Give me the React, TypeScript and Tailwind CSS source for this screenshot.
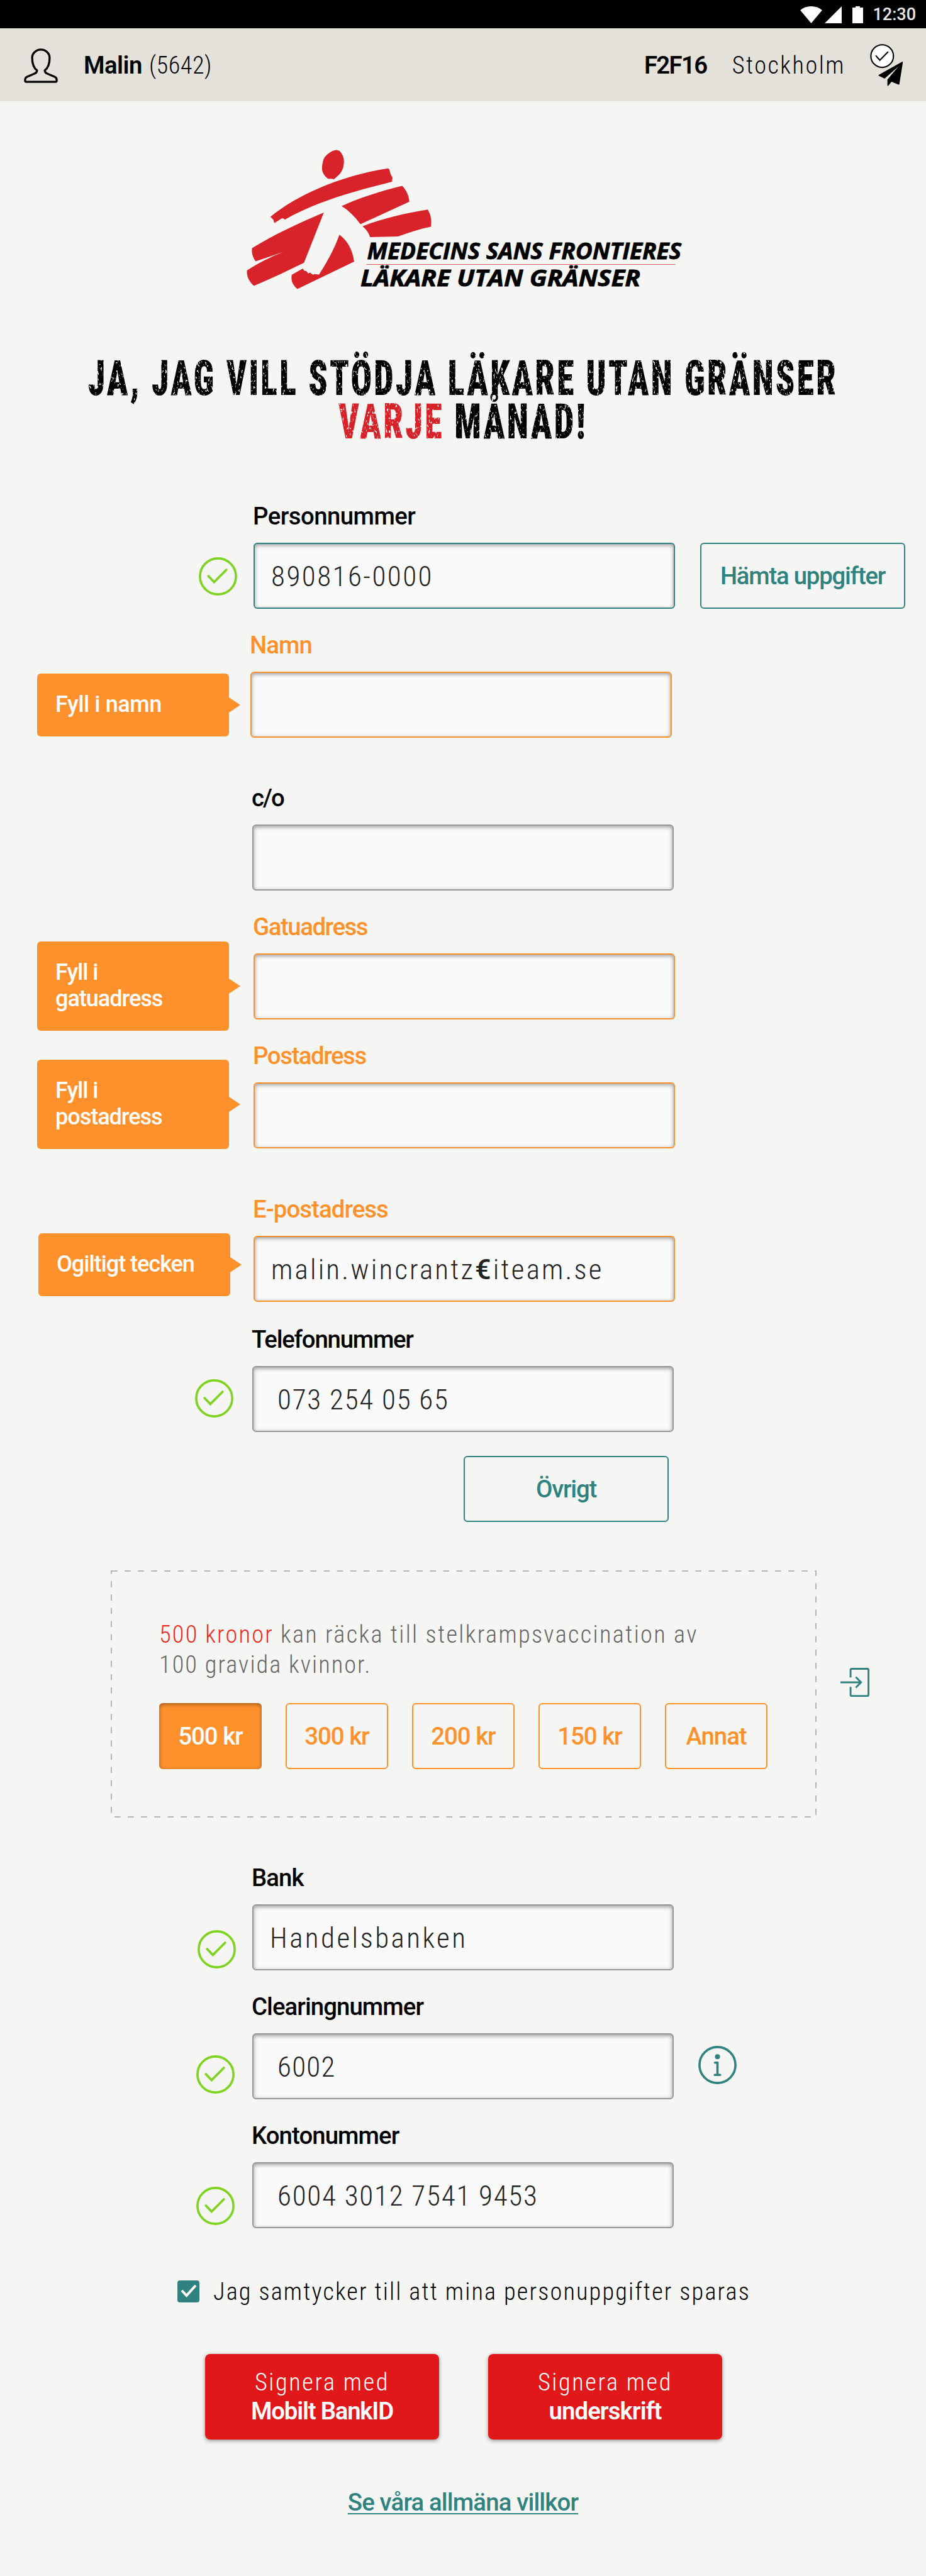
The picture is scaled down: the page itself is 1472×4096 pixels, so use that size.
import type { ReactNode } from "react";

const WifiIcon = () => (
  <svg className="h-[27px] w-[35px]" viewBox="0 0 36 28" fill="#fff">
    <path d="M18 28 0 6.5C5 2.2 11 0 18 0s13 2.2 18 6.5Z" />
  </svg>
);

const UserIcon = () => (
  <svg className="h-[55px] w-[54px]" viewBox="0 0 56 57" fill="none" stroke="#000" strokeWidth="3.4" strokeLinejoin="round">
    <path d="M28 2C20 2 13.6 8 13.6 15.5c0 10 2.400 16.500 8 20.700 0 3-1 4-4 5.300L5 46.800c-2 .9-3 2.300-3 4.700v2c0 1 .5 1.500 1.500 1.500h49c1 0 1.500-.5 1.500-1.500v-2c0-2.400-1-3.800-3-4.700l-12.600-5.300c-3-1.300-4-2.300-4-5.300 5.600-4.200 8-10.700 8-20.700C42.400 8 36 2 28 2Z" />
  </svg>
);

const SentIcon = () => (
  <svg className="h-[69px] w-[54px]" viewBox="0 0 56 72">
    <circle cx="20" cy="20" r="18.700" fill="#fff" stroke="#000" strokeWidth="2.200" />
    <path d="m9.800 19.700 6.400 7.200L29.400 13.300" fill="none" stroke="#000" strokeWidth="2.200" strokeLinecap="round" />
    <path d="M53 29.400 14.400 51c-.6.500-.6 1.200 0 1.600l9.600 4.700L47.200 37 28.700 59v9.800c.3.900 1 .9 1.500.2l5.300-6.300 11.500 4.500c.8.300 1.300 0 1.500-.8L54.300 30.200c0-.8-.6-1.200-1.300-.8Z" />
  </svg>
);

const CheckIcon = () => (
  <svg className="h-[61px] w-[61px]" viewBox="0 0 64 64" fill="none" stroke="#7ed321" strokeWidth="3.800" strokeLinecap="round">
    <circle cx="32" cy="32" r="30" />
    <path d="m16 31.500 9.500 10L46 21" />
  </svg>
);

const InfoIcon = () => (
  <svg className="h-[61px] w-[61px]" viewBox="0 0 64 64" fill="none" stroke="#30827f" strokeWidth="3.800" strokeLinecap="round">
    <circle cx="32" cy="32" r="30" />
    <circle cx="32" cy="18" r="4.200" fill="#30827f" stroke="none" />
    <path d="M28 28h4v20.500m-4.500 0h9" />
  </svg>
);

const ExitIcon = () => (
  <svg className="h-[46px] w-[46px]" viewBox="0 0 48 48" fill="none" stroke="#30827f" strokeWidth="3">
    <path d="M16.800 16V3.500q0-2 2-2h25.700q2 0 2 2v41q0 2-2 2H18.800q-2 0-2-2V31.500" />
    <path d="M0 24h34M25.400 15.200 34.200 24l-8.800 8.800" />
  </svg>
);

const Logo = () => (
  <svg className="h-[268px] w-[748px]" viewBox="0 0 1568 840" preserveAspectRatio="none">
    <g fill="#d8232a">
      <path d="M358 58 368 62C379 80 384 98 383 120 382 150 375 172 361 189L350 204 343 201 330 201C318 188 310 170 310 150 310 125 315 100 320 92 332 72 345 60 358 58Z" />
      <path d="M138 391C220 290 360 190 530 150L534 154 539 180 545 196 543 216C420 262 290 315 186 405L181 399 176 399 151 422 148 406Z" />
      <path d="M375 338C430 300 500 265 577 237 592 260 599 285 601 316L438 428C420 392 400 360 375 338Z" />
      <path d="M445 438C510 400 590 372 662 355 672 378 676 405 673 440 635 452 600 468 563 489L470 492C465 470 458 455 445 438Z" />
      <path d="M316 370C235 420 150 480 77 547 74 570 80 595 89 613L182 566C140 590 100 620 60 658 58 690 68 715 83 735 140 700 195 660 250 620Z" />
      <path d="M368 480C395 510 412 555 417 614L228 751C212 730 206 710 209 680L246 649 250 659 258 662 264 673 270 669 280 680 285 676 300 679C325 620 350 555 368 480Z" />
    </g>
    <path d="M458 628H1487" stroke="#d8232a" strokeWidth="3" />
    <g transform="scale(2.010 3)" fontFamily="Open Sans" fontWeight="700" fontStyle="italic" fontSize="37.500" stroke="#000" strokeWidth="0.800">
      <text x="229" y="200.500" textLength="521" lengthAdjust="spacingAndGlyphs">MEDECINS SANS FRONTIERES</text>
      <text x="218" y="245.500" textLength="464" lengthAdjust="spacingAndGlyphs">LÄKARE UTAN GRÄNSER</text>
    </g>
  </svg>
);

const tones = {
  teal: { label: "text-black", box: "border-[#30827f]" },
  gray: { label: "text-black", box: "border-[#979797]" },
  orange: { label: "text-[#ff912c]", box: "border-[#ff912c]" },
};

function Field({ label, tone, left, leftWidth, value, right, className = "" }: {
  label: ReactNode;
  tone: keyof typeof tones;
  left?: ReactNode;
  leftWidth: string;
  value?: ReactNode;
  right?: ReactNode;
  className?: string;
}) {
  return (
    <div className={`flex h-[170px] items-start ${className}`}>
      <div className={`shrink-0 ${leftWidth}`}>{left}</div>
      <div className="w-[670px] shrink-0">
        <div className={`h-[46px] text-[38.300px] leading-[46px] font-medium tracking-[-0.900px] ${tones[tone].label}`}>
          <span className="-ml-[1px]">{label}</span>
        </div>
        <div className={`mt-[19px] flex h-[105px] items-center rounded-[6px] border-2 bg-[#fafafa] pt-[3px] text-[45px] font-light tracking-[1.800px] whitespace-nowrap text-[#222] [font-stretch:75%] shadow-[inset_0_2px_6px_rgba(0,0,0,0.4)] ${tones[tone].box}`}>
          {value}
        </div>
      </div>
      {right}
    </div>
  );
}

function Tag({ children, className }: { children: ReactNode; className: string }) {
  return (
    <div className={`flex w-[323px] items-center ${className}`}>
      <div className="h-full w-[305px] rounded-[6px] bg-[#ff912c] pt-[28px] pl-[29px] text-[36px] leading-[42px] font-medium tracking-[-1px] whitespace-nowrap text-white">{children}</div>
      <svg className="h-[24px] w-[18px]" viewBox="0 0 18 24" fill="#ff912c"><path d="M0 0 18 12 0 24Z" /></svg>
    </div>
  );
}

export default function App() {
  return (
    <div className="h-[4096px] w-[1472px] overflow-hidden bg-[#f5f5f4] font-[Roboto,sans-serif] text-black">
      <div className="flex h-[45px] items-start justify-end bg-black pt-[9.500px] pr-[16px]">
        <WifiIcon />
        <svg className="ml-[4px] h-[27px] w-[27px]" viewBox="0 0 27 27" fill="#fff"><path d="M27 0V27H0Z" /></svg>
        <svg className="ml-[17px] h-[27px] w-[17px]" viewBox="0 0 17 27" fill="#fff"><path d="M5 0h7v2h5v25H0V2h5Z" /></svg>
        <span className="ml-[15px] text-[27px] leading-[27px] font-medium text-[#e6e6e6]">12:30</span>
      </div>
      <header className="flex h-[116px] items-center bg-[#e4e1da] pt-[2px] pr-[35px] pl-[38px] text-[38.300px]">
        <UserIcon />
        <span className="ml-[41px] font-semibold tracking-[-0.500px]">Malin</span>
        <span className="ml-[11px] font-light tracking-[0.500px] [font-stretch:75%]">(5642)</span>
        <span className="ml-auto font-semibold tracking-[-1.600px]">F2F16</span>
        <span className="ml-[40px] font-light tracking-[2.500px] [font-stretch:75%]">Stockholm</span>
        <span className="ml-[39px]"><SentIcon /></span>
      </header>
      <div className="mt-[59px] ml-[364px] h-[268px]"><Logo /></div>

      <svg className="absolute h-0 w-0">
        <filter id="grunge" x="0" y="0" width="100%" height="100%">
          <feTurbulence type="fractalNoise" baseFrequency="0.38 0.2" numOctaves="3" seed="7" result="n" />
          <feColorMatrix in="n" type="matrix" values="0 0 0 0 0  0 0 0 0 0  0 0 0 0 0  10 0 0 0 -6.300" result="m" />
          <feComposite in="SourceGraphic" in2="m" operator="out" />
        </filter>
      </svg>
      <h1 className="mt-[66px] flex h-[174px] flex-col items-center pt-[13px] text-[78px] leading-[69px] font-black tracking-[4.500px] whitespace-nowrap [filter:url(#grunge)] [font-stretch:75%]">
        <span className="scale-x-[0.714]">JA, JAG VILL STÖDJA LÄKARE UTAN GRÄNSER</span>
        <span className="scale-x-[0.720]"><span className="text-[#d8232a]">VARJE</span> MÅNAD!</span>
      </h1>

      <Field className="mt-[70px]" tone="teal" label={<span className="tracking-[-0.500px]">Personnummer</span>} leftWidth="w-[403px]"
        left={<div className="mt-[88px] ml-[316px]"><CheckIcon /></div>}
        value={<span className="ml-[26px] tracking-[2.500px]">890816-0000</span>}
        right={<button className="mt-[65px] ml-[40px] h-[105px] w-[326px] rounded-[6px] border-2 border-[#30827f] text-[38.300px] font-medium tracking-[-1.200px] text-[#30827f]">Hämta uppgifter</button>} />
      <Field className="mt-[35px]" tone="orange" label="Namn" leftWidth="w-[398px]"
        left={<Tag className="mt-[68px] ml-[59px] h-[100px]"><span className="tracking-[-0.400px]">Fyll i namn</span></Tag>} />
      <Field className="mt-[73px]" tone="gray" label={<span className="tracking-[-2px]">c/o</span>} leftWidth="w-[401px]" />
      <Field className="mt-[35px]" tone="orange" label={<span className="tracking-[-1.400px]">Gatuadress</span>} leftWidth="w-[403px]"
        left={<Tag className="mt-[46px] ml-[59px] h-[142px]">Fyll i<br />gatuadress</Tag>} />
      <Field className="mt-[35px]" tone="orange" label={<span className="tracking-[-1.400px]">Postadress</span>} leftWidth="w-[403px]"
        left={<Tag className="mt-[29px] ml-[59px] h-[142px]">Fyll i<br />postadress</Tag>} />
      <Field className="mt-[74px]" tone="orange" label="E-postadress" leftWidth="w-[403px]"
        left={<Tag className="mt-[61px] ml-[61px] h-[100px]">Ogiltigt tecken</Tag>}
        value={<span className="ml-[26px] tracking-[3.200px]">malin.wincrantz<b className="font-medium [font-stretch:100%]">€</b>iteam.se</span>} />
      <Field className="mt-[37px]" tone="gray" label={<span className="tracking-[-1.200px]">Telefonnummer</span>} leftWidth="w-[401px]"
        left={<div className="mt-[86px] ml-[310px]"><CheckIcon /></div>}
        value={<span className="ml-[38px]">073 254 05 65</span>} />
      <button className="mt-[38px] ml-[737px] block h-[105px] w-[326px] rounded-[6px] border-2 border-[#30827f] text-[38.300px] font-medium tracking-[-1.200px] text-[#30827f]">Övrigt</button>

      <div className="mt-[77px] ml-[176px] flex h-[393px] items-center">
        <div className="relative h-[393px] w-[1122px] pt-[78px] pl-[77px]">
          <svg className="absolute inset-0 h-full w-full" fill="none" stroke="#b5b5b5" strokeWidth="2">
            <rect x="1" y="1" width="1120" height="391" strokeDasharray="9.600 11.500" />
          </svg>
          <p className="text-[38.300px] leading-[48px] font-light tracking-[2.350px] text-[#666] [font-stretch:75%]">
            <span className="font-[350] tracking-[2.200px] text-[#ee2a1c]">500 kronor</span> kan räcka till stelkrampsvaccination av
            <br /><span className="tracking-[2.050px]">100 gravida kvinnor.</span>
          </p>
          <div className="mt-[37px] flex gap-[38px] text-[38.300px] font-medium tracking-[-1px] text-[#ff912c]">
            <button className="h-[105px] w-[163px] rounded-[6px] bg-[#ff912c] text-white shadow-[inset_0_2px_6px_rgba(0,0,0,0.4)]">500 kr</button>
            <button className="h-[105px] w-[163px] rounded-[6px] border-2 border-[#ff912c]">300 kr</button>
            <button className="h-[105px] w-[163px] rounded-[6px] border-2 border-[#ff912c]">200 kr</button>
            <button className="h-[105px] w-[163px] rounded-[6px] border-2 border-[#ff912c]">150 kr</button>
            <button className="h-[105px] w-[163px] rounded-[6px] border-2 border-[#ff912c]">Annat</button>
          </div>
        </div>
        <span className="mb-[37px] ml-[38px]"><ExitIcon /></span>
      </div>

      <Field className="mt-[73px]" tone="gray" label="Bank" leftWidth="w-[401px]"
        left={<div className="mt-[106px] ml-[314px]"><CheckIcon /></div>}
        value={<span className="ml-[26px] tracking-[3.500px]">Handelsbanken</span>} />
      <Field className="mt-[35px]" tone="gray" label="Clearingnummer" leftWidth="w-[401px]"
        left={<div className="mt-[100px] ml-[312px]"><CheckIcon /></div>}
        value={<span className="ml-[38px] tracking-[1.300px]">6002</span>}
        right={<div className="mt-[85px] ml-[39px]"><InfoIcon /></div>} />
      <Field className="mt-[35px]" tone="gray" label="Kontonummer" leftWidth="w-[401px]"
        left={<div className="mt-[104px] ml-[312px]"><CheckIcon /></div>}
        value={<span className="ml-[38px]">6004 3012 7541 9453</span>} />

      <label className="mt-[77px] ml-[282px] flex h-[46px] items-center text-[38.300px] font-light tracking-[2.150px] [font-stretch:75%]">
        <span className="flex h-[35px] w-[35px] items-center justify-center rounded-[4px] bg-[#30827f]">
          <svg className="h-[22px] w-[26px]" viewBox="0 0 26 22" fill="none" stroke="#fff" strokeWidth="4"><path d="m2 10 7.500 8L24 2" /></svg>
        </span>
        <span className="mt-[2px] ml-[22px]">Jag samtycker till att mina personuppgifter sparas</span>
      </label>
      <div className="mt-[77px] ml-[326px] flex gap-[78px] text-[38.300px] leading-[46px] text-white">
        <button className="h-[136px] w-[372px] rounded-[8px] bg-[#e1181a] shadow-[0_2px_6px_rgba(0,0,0,0.4)]"><span className="font-light tracking-[2.600px] [font-stretch:75%]">Signera med</span><br /><span className="font-semibold tracking-[-1.200px]">Mobilt BankID</span></button>
        <button className="h-[136px] w-[372px] rounded-[8px] bg-[#e1181a] shadow-[0_2px_6px_rgba(0,0,0,0.4)]"><span className="font-light tracking-[2.600px] [font-stretch:75%]">Signera med</span><br /><span className="font-semibold tracking-[-0.900px]">underskrift</span></button>
      </div>
      <div className="mt-[77px] text-center text-[38.300px] leading-[46px] font-medium tracking-[-0.800px] text-[#30827f]">
        <span className="underline decoration-2 underline-offset-[4px]">Se våra allmäna villkor</span>
      </div>
    </div>
  );
}
